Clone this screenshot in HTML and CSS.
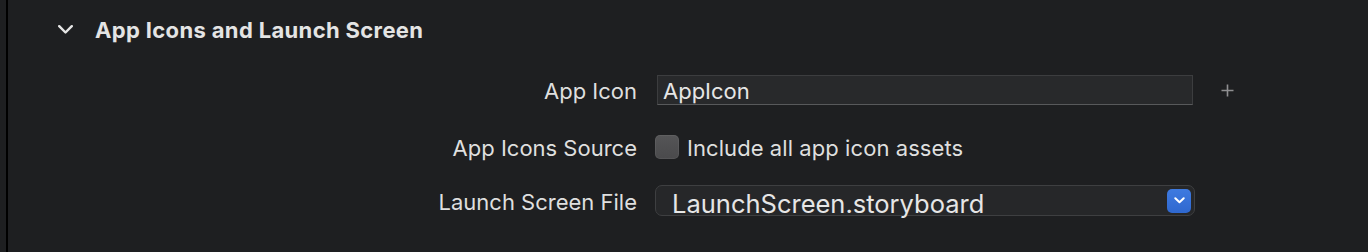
FILE: index.html
```html
<!DOCTYPE html>
<html lang="en">
<head>
    <meta charset="UTF-8">
    <title>App Icons and Launch Screen</title>
    <link rel="stylesheet" href="styles.css">
</head>
<body>
    <div class="panel">
        <div class="section-header">
            <svg class="disclosure" width="15" height="9" viewBox="0 0 15 9">
                <polyline points="1.2,1.2 7.5,7.5 13.8,1.2" fill="none" stroke="#e6e6e6" stroke-width="2.4" stroke-linecap="round" stroke-linejoin="round"/>
            </svg>
            <h2>App Icons and Launch Screen</h2>
        </div>

        <div class="settings">
            <div class="row row-icon">
                <label class="row-label" for="app-icon">App Icon</label>
                <input class="text-field" id="app-icon" type="text" value="AppIcon">
                <svg class="add" width="13" height="13" viewBox="0 0 13 13">
                    <path d="M6.5 0.5 V12.5 M0.5 6.5 H12.5" stroke="#8f8f91" stroke-width="1.6"/>
                </svg>
            </div>

            <div class="row row-source">
                <span class="row-label">App Icons Source</span>
                <label class="check">
                    <span class="check-box"></span>
                    <span>Include all app icon assets</span>
                </label>
            </div>

            <div class="row row-launch">
                <span class="row-label">Launch Screen File</span>
                <div class="popup">
                    <span class="popup-value">LaunchScreen.storyboard</span>
                    <span class="popup-arrow">
                        <svg width="11" height="7" viewBox="0 0 11 7">
                            <polyline points="1.3,1.3 5.5,5.3 9.7,1.3" fill="none" stroke="#ffffff" stroke-width="2" stroke-linecap="round" stroke-linejoin="round"/>
                        </svg>
                    </span>
                </div>
            </div>
        </div>
    </div>
</body>
</html>
```

FILE: styles.css
```css
*,
*:before,
*:after {
    padding: 0;
    margin: 0;
    box-sizing: border-box;
}
html,
body {
    height: 252px;
    overflow: hidden;
}
body {
    background-color: #1e1f21;
    font-family: 'Inter', 'Liberation Sans', sans-serif;
    color: #dfdfdf;
}
.panel {
    margin-left: 6px;
    height: 252px;
    padding-top: 14px;
    border-left: 2px solid #000000;
}
.section-header {
    display: flex;
    align-items: center;
    height: 30px;
    padding-left: 50px;
}
.disclosure {
    display: block;
    margin-right: 22px;
}
.section-header h2 {
    font-size: 22px;
    font-weight: 700;
    letter-spacing: 0.35px;
    color: #e4e4e4;
    line-height: 30px;
    padding-top: 2px;
}
.settings {
    margin-top: 31px;
    display: flex;
    flex-direction: column;
}
.row {
    display: flex;
    align-items: center;
    height: 30px;
    font-size: 22px;
}
.row-source {
    margin-top: 27px;
}
.row-launch {
    margin-top: 23px;
    height: 31px;
}
.row-label {
    width: 629px;
    text-align: right;
    margin-right: 18px;
    white-space: nowrap;
    padding-top: 2px;
}
.text-field {
    width: 536px;
    height: 30px;
    margin-left: 2px;
    background-color: #28292b;
    border: 1px solid #3c3d3f;
    border-bottom-color: #58595b;
    color: #e6e6e6;
    font-family: inherit;
    font-size: 22px;
    padding: 2px 5px 0;
    outline: none;
}
.add {
    display: block;
    margin-left: 28px;
}
.check {
    display: flex;
    align-items: center;
    gap: 8px;
}
.check-box {
    width: 24px;
    height: 24px;
    border-radius: 5px;
    background: linear-gradient(#555557, #4a4a4c);
    box-shadow: inset 0 0 0 1px rgba(255, 255, 255, 0.06);
}
.check span:last-child {
    letter-spacing: 0.07px;
    padding-top: 2px;
}
.popup {
    display: flex;
    align-items: center;
    justify-content: space-between;
    width: 540px;
    height: 31px;
    padding: 0 3px 0 16px;
    border: 1px solid #3e3f41;
    border-radius: 7px;
    background-color: #262729;
}
.popup-value {
    font-size: 25.5px;
    color: #e6e6e6;
    line-height: 31px;
    padding-top: 5px;
}
.popup-arrow {
    display: flex;
    align-items: center;
    justify-content: center;
    width: 24px;
    height: 24px;
    border-radius: 5px;
    background: linear-gradient(#3e7ae0, #2f68cf);
}
```
